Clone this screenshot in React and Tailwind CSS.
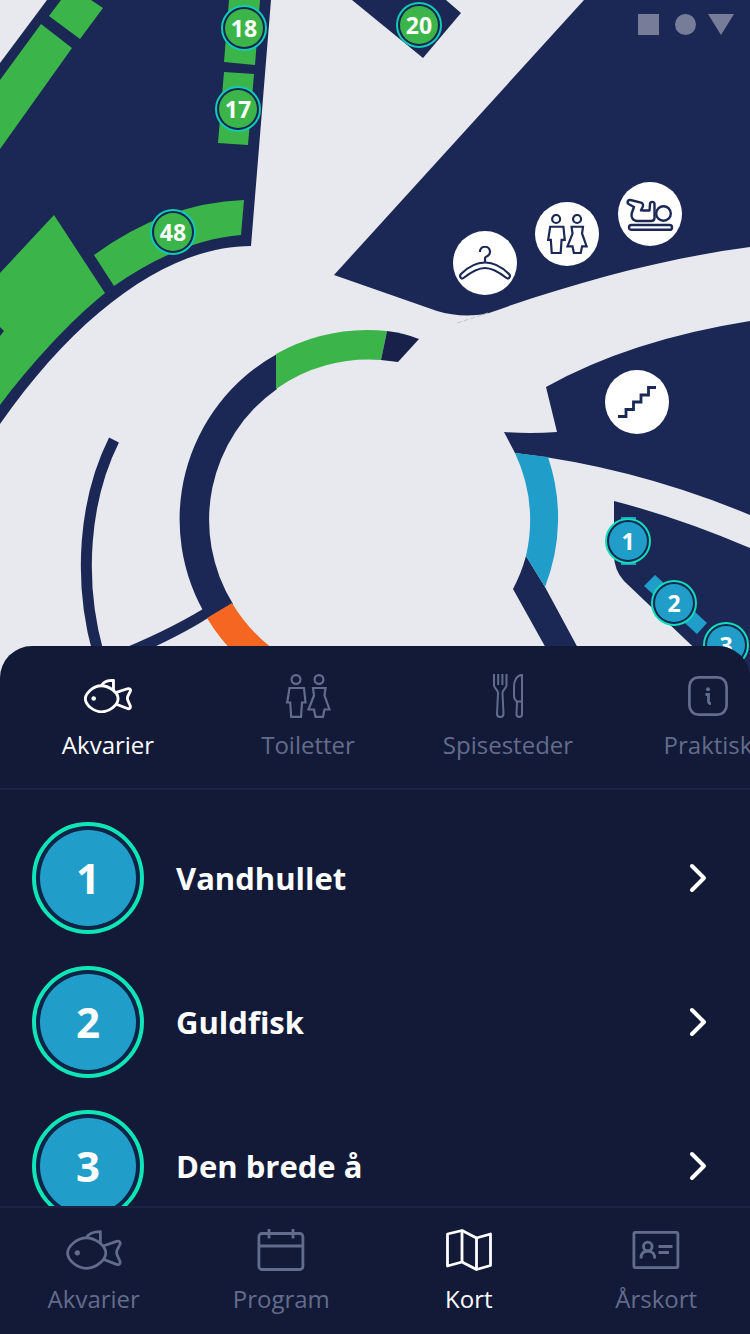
import React, { useState } from "react";
import clsx from "clsx";

const MAP_WIDTH = 750;
const MAP_HEIGHT = 690;

const numberPins = [
  { label: "18", x: 244, y: 28, area: "green" },
  { label: "17", x: 238, y: 109, area: "green" },
  { label: "48", x: 173, y: 232, area: "green" },
  { label: "20", x: 419, y: 25, area: "green" },
  { label: "1", x: 628, y: 541, area: "blue" },
  { label: "2", x: 674, y: 603, area: "blue" },
  { label: "3", x: 726, y: 645, area: "blue" },
];

const aquariums = [
  { id: 1, name: "Vandhullet" },
  { id: 2, name: "Guldfisk" },
  { id: 3, name: "Den brede å" },
];

const place = (x, y) => ({
  left: `${(x / MAP_WIDTH) * 100}%`,
  top: `${(y / MAP_HEIGHT) * 100}%`,
});

// icons

const FishIcon = ({ className = "w-14", strokeWidth = 2.8 }) => (
  <svg
    className={className}
    viewBox="0 0 57 41"
    fill="none"
    stroke="currentColor"
    strokeWidth={strokeWidth}
    strokeLinejoin="round"
    strokeLinecap="round"
  >
    <path d="M1.6 23.5C1.6 17 11 8 20.5 8C30 8 40.5 16 40.5 23.5C40.5 31 30 39 21 39C11 39 1.6 30.5 1.6 23.5Z" />
    <path d="M21 7.5C23 3.5 28 1.6 35 1.6V13" />
    <path d="M38.5 16L51.5 11.6C54.5 10.8 56 12.6 54.8 15C53.4 18 51.5 20 51.5 23C51.5 26 53.5 28 54.8 31.5C55.8 34.5 54 36 51.5 35L38.5 30" />
    <circle cx="11.5" cy="23.2" r="2.7" fill="currentColor" stroke="none" />
  </svg>
);

const ToiletIcon = ({ className = "w-[45px]", strokeWidth = 2.2 }) => (
  <svg
    className={className}
    viewBox="0 0 45 44"
    fill="none"
    stroke="currentColor"
    strokeWidth={strokeWidth}
  >
    <circle cx="10" cy="5.5" r="4.4" />
    <circle cx="33" cy="5.5" r="4.4" />
    <path d="M3.5 14H18L19.5 28.5H16L15 42.8H5.2L4.2 28.5H1.2L3.5 14Z" />
    <path d="M27 14H39.5L38.5 21.5L43.5 35.5H38.5L37 42.8H29.5L28 35.5H22.5L28 21.5L27 14Z" />
  </svg>
);

const CutleryIcon = () => (
  <svg
    className="w-[30px]"
    viewBox="0 0 30 44"
    fill="none"
    stroke="currentColor"
    strokeWidth="2"
  >
    <path d="M1 0V11C1 15 5 15.5 5 19L4 40C4 42 5.3 43 7.2 43C9.2 43 10.5 42 10.5 40L9.5 19C9.5 15.5 13.5 15 13.5 11V0" />
    <path d="M5.2 0V11M9.4 0V11" />
    <path d="M29 1V40C29 42 28 43 26.3 43C24.5 43 23.5 42 23.5 40L24 27.5C22 26 21 24.5 21 22V13C21 6 24 1 29 1ZM24 27.5H29" />
  </svg>
);

const InfoIcon = () => (
  <svg className="w-10" viewBox="0 0 40 40" fill="none" stroke="currentColor">
    <rect x="1.4" y="1.4" width="37.2" height="37.2" rx="9" strokeWidth="2.7" />
    <circle cx="20" cy="13.2" r="2" fill="currentColor" stroke="none" />
    <path d="M17.5 18.5H20.5V25.5C20.5 27 21 27.5 23 27.5" strokeWidth="2.8" />
  </svg>
);

const CalendarIcon = () => (
  <svg
    className="w-12"
    viewBox="0 0 48 42"
    fill="none"
    stroke="currentColor"
    strokeWidth="2.8"
  >
    <rect x="1.9" y="4.5" width="44" height="36" rx="3" />
    <path d="M2 17H46M12 0V9.5M36 0V9.5" />
  </svg>
);

const MapIcon = () => (
  <svg
    className="w-[46px]"
    viewBox="0 0 46 42"
    fill="none"
    stroke="currentColor"
    strokeWidth="2.8"
    strokeLinejoin="round"
  >
    <path d="M1.5 5L16 1.5L30.5 9L44.5 5V36.5L30.5 40.5L16 33L1.5 37V5Z" />
    <path d="M16 1.5V33M30.5 9V40.5" />
  </svg>
);

const CardIcon = () => (
  <svg
    className="w-12"
    viewBox="0 0 48 38"
    fill="none"
    stroke="currentColor"
    strokeWidth="2.8"
  >
    <rect x="1.9" y="1.4" width="44" height="35.2" rx="1.5" />
    <circle cx="15.8" cy="15.5" r="4.3" />
    <path d="M9 27.5C9 23 11 20 15.8 20C20.5 20 22.8 23 22.8 27.5" />
    <path d="M26.5 15.5H40.5M26.5 21.5H37" />
  </svg>
);

const HangerIcon = () => (
  <svg
    className="w-[52px]"
    viewBox="0 0 52 34"
    fill="none"
    stroke="currentColor"
    strokeWidth="2.2"
    strokeLinejoin="round"
  >
    <path d="M21 6A5 5 0 1 1 27.5 10.5C26.5 11 26 11.5 26 12.5V16.5" />
    <path d="M26 16.5C36 16.5 44 22 50 28C52 30 50 34 47.5 32C40.5 26.5 34 22 26 22C18 22 11.5 26.5 4.5 32C2 34 0 30 2 28C8 22 16 16.5 26 16.5Z" />
  </svg>
);

const BabyIcon = () => (
  <svg
    className="w-12"
    viewBox="0 0 48 33"
    fill="none"
    stroke="currentColor"
    strokeWidth="2.4"
    strokeLinejoin="round"
    strokeLinecap="round"
  >
    <circle cx="37.5" cy="15.5" r="7.3" />
    <path d="M15 12.5L16.8 8.5C17.4 6.8 16.8 5.2 15 4.6L4.5 2C1.5 1.5 0.5 5 3 6.3L8 9L6 14.5C4.5 19 7 23 11 23H25C27.5 23 28.5 22 28.5 20V6C28.5 3.2 24.3 3.2 24 6L23.5 12.5H17" />
    <rect x="3" y="27" width="43" height="4.8" rx="2.4" />
  </svg>
);

const StairsIcon = () => (
  <svg
    className="w-10"
    viewBox="0 0 40 32"
    fill="none"
    stroke="currentColor"
    strokeWidth="2.8"
  >
    <path d="M1 30.5H9V23.5H16.5V16H24V9H31.5V1.5H39" />
  </svg>
);

const ChevronIcon = () => (
  <svg
    className="w-5"
    viewBox="0 0 20 30"
    fill="none"
    stroke="currentColor"
    strokeWidth="4"
    strokeLinecap="round"
    strokeLinejoin="round"
  >
    <path d="M4 3L16 15L4 27" />
  </svg>
);

const facilityPins = [
  { label: "Garderobe", x: 485, y: 263, icon: <HangerIcon /> },
  {
    label: "Toiletter",
    x: 567,
    y: 234,
    icon: <ToiletIcon className="w-[41px]" strokeWidth={2.4} />,
  },
  { label: "Puslerum", x: 650, y: 214, icon: <BabyIcon /> },
  { label: "Trappe", x: 637, y: 402, icon: <StairsIcon /> },
];

const categories = [
  { name: "Akvarier", icon: <FishIcon className="w-12" strokeWidth={3.4} /> },
  { name: "Toiletter", icon: <ToiletIcon /> },
  { name: "Spisesteder", icon: <CutleryIcon /> },
  { name: "Praktisk", icon: <InfoIcon /> },
];

const pages = [
  { name: "Akvarier", href: "#akvarier", icon: <FishIcon /> },
  { name: "Program", href: "#program", icon: <CalendarIcon /> },
  { name: "Kort", href: "#kort", icon: <MapIcon /> },
  { name: "Årskort", href: "#aarskort", icon: <CardIcon /> },
];

const FloorPlan = () => (
  <svg
    className="block w-full h-full"
    viewBox={`0 0 ${MAP_WIDTH} ${MAP_HEIGHT}`}
    aria-hidden="true"
  >
    {/* buildings */}
    <g fill="#1b2855">
      <path d="M47 0H271L251 246C170 246 80 310 0 424V63Z" />
      <path d="M352 0L423 58L461 13L446 0Z" />
      <path d="M584 0L334 275L437 311Q460 318 486 314C570 284 660 259 750 247V0Z" />
      <path d="M546 387Q630 340 750 321V515Q635 467 515 453L504 432Q530 434 557 432Z" />
      <path d="M614 501Q680 518 750 548V701L624 581Q614 570 614 555Z" />
      <path d="M526 556A160 160 0 0 1 513 589L547 650H579L545 587Z" />
      <path d="M203 609L208 618Q180 636 130 658L110 654Q165 632 203 609Z" />
    </g>
    <path
      d="M114 440C84 500 78 580 98 652"
      fill="none"
      stroke="#1b2855"
      strokeWidth="11"
    />
    <path
      d="M457 323L488 313"
      stroke="#c3c6d1"
      strokeWidth="1"
      strokeDasharray="5 2"
    />

    {/* round hall */}
    <path
      fill="#1b2855"
      d="M277 354A189 189 0 0 0 208 619L233 604A160 160 0 0 1 277 389Z"
    />
    <path
      fill="#3bb54a"
      d="M276 354A189 189 0 0 1 387 331L381 360A160 160 0 0 0 276 389Z"
    />
    <path fill="#17214a" d="M387 331Q404 333 419 339L398 362L381 360Z" />
    <path
      fill="#219dca"
      d="M515 453L548 457A189 189 0 0 1 545 587L526 556A160 160 0 0 0 515 453Z"
    />
    <path
      fill="#f46622"
      d="M232 603L207 618A189 189 0 0 0 238 657H285A160 160 0 0 1 232 603Z"
    />

    {/* tanks */}
    <g fill="#3bb54a">
      <path d="M49 16L61 0H91L103 8L80 39Z" />
      <path d="M41 24L72 48L0 149V80Z" />
      <path d="M229 0H260L255 65L224 62Z" />
      <path d="M224 72L254 74L248 145L218 143Z" />
      <path d="M94 255Q165 203 244 200L241 235Q180 240 114 286Z" />
      <path d="M54 215L105 293C70 321 30 365 0 405V336L4 331L0 327V273Z" />
    </g>
    <g fill="#219dca">
      <path d="M621 517H636V565H621Z" />
      <path d="M655 575L644 586L697 634L707 623Z" />
    </g>
  </svg>
);

const MapView = () => (
  <section
    aria-label="Kort"
    className="relative w-full shrink-0 aspect-[750/690] bg-[#e8e9ee]"
  >
    <FloorPlan />
    {numberPins.map((pin) => (
      <button
        key={pin.label}
        type="button"
        style={place(pin.x, pin.y)}
        className={clsx(
          "absolute -translate-x-1/2 -translate-y-1/2 size-[46px] rounded-full border-2 p-0.5 bg-[#122650]",
          pin.area === "green" ? "border-[#14c9b7]" : "border-[#12ddb8]"
        )}
      >
        <span
          className={clsx(
            "flex size-full items-center justify-center rounded-full text-[23px] leading-none font-bold text-white",
            pin.area === "green" ? "bg-[#3bb54a]" : "bg-[#219dca]"
          )}
        >
          {pin.label}
        </span>
      </button>
    ))}
    {facilityPins.map((pin) => (
      <button
        key={pin.label}
        type="button"
        aria-label={pin.label}
        style={place(pin.x, pin.y)}
        className="absolute -translate-x-1/2 -translate-y-1/2 flex size-16 items-center justify-center rounded-full bg-white text-[#1b2855]"
      >
        {pin.icon}
      </button>
    ))}
    <div className="absolute top-3.5 right-4 flex items-center gap-4 text-[#777d99]">
      <span className="size-[21px] bg-current" />
      <span className="size-[21px] rounded-full bg-current" />
      <svg className="-ml-1 w-[26px]" viewBox="0 0 26 21" fill="currentColor">
        <path d="M0 0H26L13 21Z" />
      </svg>
    </div>
  </section>
);

const App = () => {
  const [category, setCategory] = useState("Akvarier");

  return (
    <div className="flex h-screen flex-col overflow-hidden bg-[#121a38] font-['Open_Sans','Noto_Sans',sans-serif]">
      <MapView />

      <main className="relative -mt-11 flex min-h-0 flex-1 flex-col overflow-hidden rounded-t-4xl bg-[#121a38]">
        <div className="flex shrink-0 overflow-x-auto border-b-2 border-[#1b2442] px-2 pt-7 pb-[27px] [scrollbar-width:none]">
          {categories.map((c) => (
            <button
              key={c.name}
              type="button"
              aria-pressed={category === c.name}
              onClick={() => setCategory(c.name)}
              className={clsx(
                "flex w-[200px] shrink-0 flex-col items-center gap-[11px]",
                category === c.name ? "text-white" : "text-[#646c8b]"
              )}
            >
              <span className="flex h-11 items-center">{c.icon}</span>
              <span className="text-2xl leading-8">{c.name}</span>
            </button>
          ))}
        </div>

        <ul className="min-h-0 flex-1 overflow-hidden pt-4">
          {aquariums.map((a) => (
            <li key={a.id}>
              <button
                type="button"
                className="flex h-36 w-full items-center gap-8 pr-[42px] pl-8 text-left text-white"
              >
                <span className="size-28 shrink-0 rounded-full border-4 border-[#0ee6b8] bg-[#0f2347] p-1">
                  <span className="flex size-full items-center justify-center rounded-full bg-[#219dca] text-[42px] leading-none font-bold">
                    {a.id}
                  </span>
                </span>
                <span className="flex-1 text-[31px] leading-10 font-bold">
                  {a.name}
                </span>
                <ChevronIcon />
              </button>
            </li>
          ))}
        </ul>

        <nav className="grid shrink-0 grid-cols-4 border-t-2 border-[#1b2442] pt-5 pb-[19px]">
          {pages.map((p) => (
            <a
              key={p.name}
              href={p.href}
              className={clsx(
                "flex flex-col items-center gap-[11px]",
                p.name === "Kort" ? "text-white" : "text-[#646c8b]"
              )}
            >
              <span className="flex h-11 items-center">{p.icon}</span>
              <span className="text-2xl leading-8">{p.name}</span>
            </a>
          ))}
        </nav>
      </main>
    </div>
  );
};

export default App;
